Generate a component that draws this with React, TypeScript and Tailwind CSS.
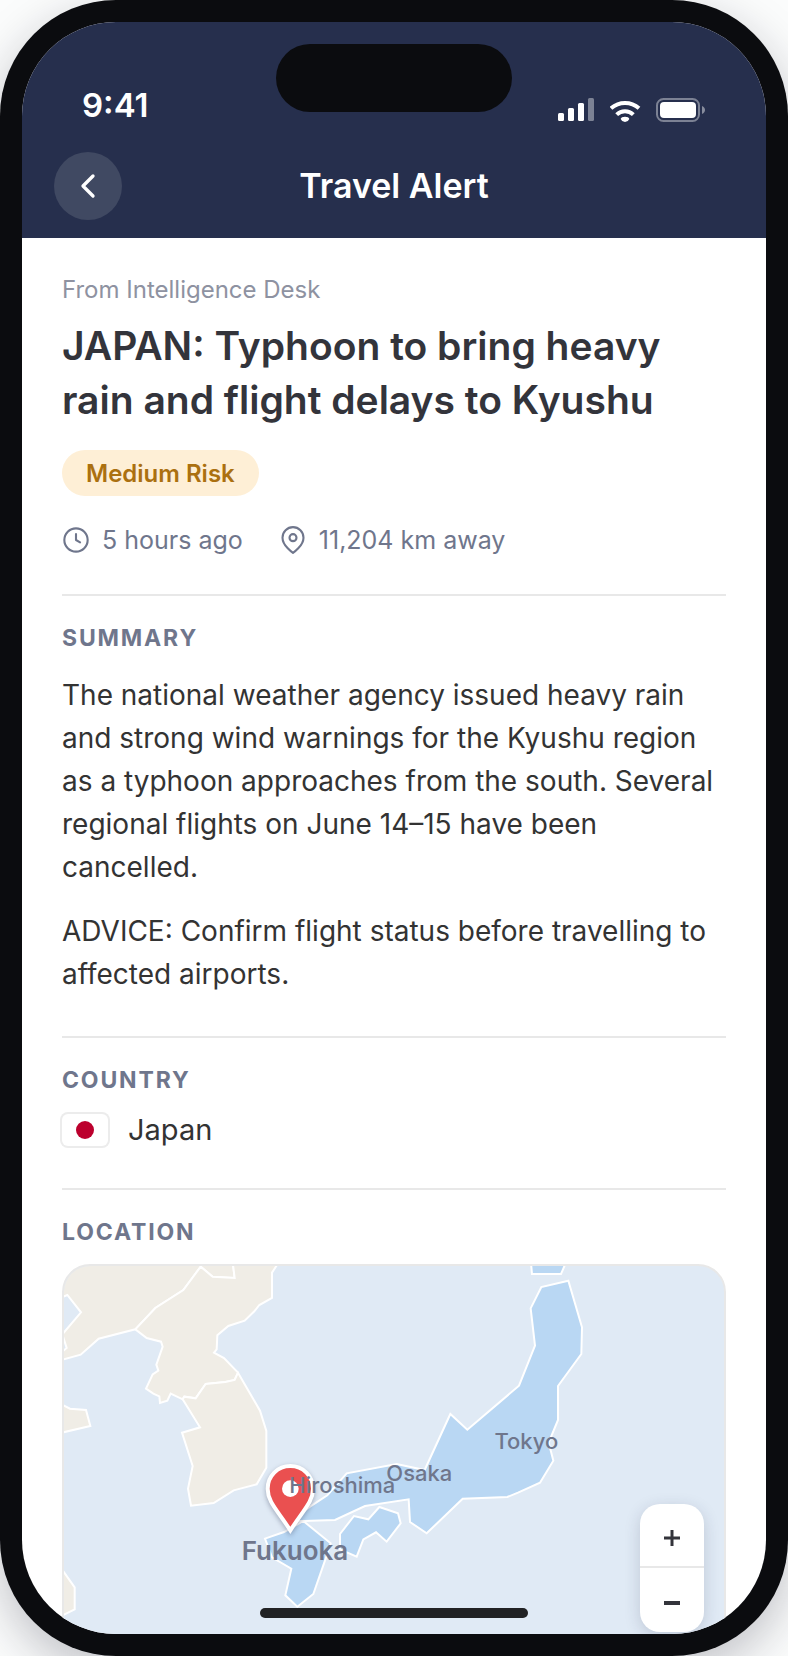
import type { ReactNode } from "react";
import { ChevronLeft } from "lucide-react";

const cities = [
    { name: "Hiroshima", x: 835, y: 682 },
    { name: "Osaka", x: 1066, y: 646 },
    { name: "Tokyo", x: 1387, y: 549 },
];

function StatusBar() {
    return (
        <div className="flex items-end justify-between px-[60px] pt-[66px] text-white">
            <span className="text-[33px] leading-[34px] font-semibold">9:41</span>

            <div className="flex items-center">
                {/* signal */}
                <svg className="mr-4 h-6 w-9" viewBox="0 0 36 24" fill="currentColor">
                    <rect x="0" y="15" width="6" height="8" rx="1.5" />
                    <rect x="10" y="10" width="6" height="13" rx="1.5" />
                    <rect x="20" y="5" width="6" height="18" rx="1.5" />
                    <rect x="30" y="0" width="6" height="23" rx="1.5" opacity="0.4" />
                </svg>

                {/* wifi */}
                <svg className="mr-3.5 h-6 w-8" viewBox="0 0 96 72" fill="none" stroke="currentColor" strokeWidth="12">
                    <path d="M3 31A63 63 0 0 1 87 31" />
                    <path d="M20 50A36 36 0 0 1 70 50" />
                    <path d="M32 63Q34 56 45 56Q56 56 58 63Q55 71 45 72Q35 71 32 63Z" fill="currentColor" stroke="none" />
                </svg>

                {/* battery */}
                <svg className="h-6 w-[50px]" viewBox="0 0 50 24">
                    <rect x="1" y="1" width="42" height="22" rx="6.5" fill="none" stroke="white" strokeOpacity="0.4" strokeWidth="2" />
                    <rect x="4" y="4" width="36" height="16" rx="4" fill="white" />
                    <path d="M46 8C50 9.500 50 14.500 46 16Z" fill="white" fillOpacity="0.45" />
                </svg>
            </div>
        </div>
    );
}

function SectionTitle({ children }: { children: ReactNode }) {
    return (
        <h3 className="text-[23px] leading-7 font-bold tracking-[0.08em] text-[#6f768c] uppercase">
            {children}
        </h3>
    );
}

function LocationMap() {
    return (
        <div className="relative mt-[18px] h-[390px] shrink-0 overflow-hidden rounded-[28px] border-2 border-[#e8e8e8] bg-[#e0eaf5]">
            <svg
                className="h-full w-full"
                viewBox="0 0 1980 1158"
                preserveAspectRatio="xMidYMid slice"
                role="img"
                aria-label="Map of southern Japan"
            >
                <g stroke="white" strokeWidth="6">
                    {/* mainland and Korea */}
                    <g fill="#f0ede6">
                        <path d="M-20-20H505L512 36L446 32L410 2L358 72L274 126L214 190L104 218L50 266L-20 285Z" />
                        <path d="M410 2L446 32L512 36L505-20H650L624 20V96L586 117L571 136L542 164L493 180L460 208L458 250L450 260L480 276L522 320L512 342L484 348L425 354L395 397L361 392L356 400L320 383L310 404L288 411L286 391L268 383L246 368L266 325L283 314L277 296L296 242L291 227L248 216L214 190L274 126L358 72Z" />
                        <path d="M522 320L588 434L607 495V605L578 655L509 673L449 711L381 719L372 668L386 600L354 500L408 484L356 400L361 392L395 397L425 354L484 348L512 342Z" />
                        <path d="M-20 408L18 428L66 432L79 480L-20 503Z" />
                        <path d="M-20 890L32 964V1030L-20 1056Z" />
                    </g>
                    <path d="M-20 100L10 87L51 139L-5 205L8 246L-20 270Z" fill="#e0eaf5" />

                    {/* Japan */}
                    <g fill="#b9d7f3">
                        <path d="M1400-20L1404 24H1491L1510-20Z" />
                        <path d="M1513 44L1432 63L1400 127L1413 239L1365 359L1210 491L1159 444L1082 612L998 594L848 622L790 688L738 722L680 765L718 765L813 762L903 720L1034 700L1038 768L1088 802L1196 698L1330 693L1362 680L1428 650L1468 584L1454 530L1482 462V360L1552 264L1554 184Z" />
                        <path d="M828 804L870 750L913 760L946 723L1002 742L1010 772L968 827L936 799L898 820L878 872L828 850Z" />
                        <path d="M603 818L660 798L718 765L800 832L787 872L748 984L700 1022L664 988L682 908L624 874Z" />
                    </g>
                </g>

                {/* marker */}
                <g className="drop-shadow-[0_6px_8px_rgba(38,47,77,0.35)]">
                    <path
                        d="M679 600C641 600 611 630 611 668C611 708 640 732 679 793C718 732 747 708 747 668C747 630 717 600 679 600Z"
                        fill="#ea5050"
                        stroke="white"
                        strokeWidth="12"
                    />
                    <circle cx="679" cy="668" r="25" fill="white" />
                </g>

                <g fill="#6f768c" textAnchor="middle">
                    {cities.map((city) => (
                        <text key={city.name} x={city.x} y={city.y} className="text-[66px] font-medium">
                            {city.name}
                        </text>
                    ))}
                    <text x="693" y="882" className="text-[78px] font-semibold">
                        Fukuoka
                    </text>
                </g>
            </svg>

            {/* zoom control */}
            <div className="absolute right-5 bottom-5 flex w-16 flex-col overflow-hidden rounded-[20px] bg-white shadow-[0_4px_16px_rgba(38,47,77,0.18)]">
                <button type="button" aria-label="Zoom in" className="flex h-16 items-center justify-center border-b-2 border-[#e8e8e8] pt-1.5">
                    <svg className="h-4 w-4" viewBox="0 0 16 16" stroke="#33343b" strokeWidth="3">
                        <path d="M0 8h16M8 0v16" />
                    </svg>
                </button>
                <button type="button" aria-label="Zoom out" className="flex h-16 items-center justify-center pt-1.5">
                    <svg className="h-4 w-4" viewBox="0 0 16 16" stroke="#33343b" strokeWidth="4">
                        <path d="M0 8h16" />
                    </svg>
                </button>
            </div>
        </div>
    );
}

export default function App() {
    return (
        <div className="h-screen overflow-hidden bg-[#fbfcfc] font-['Inter',sans-serif]">
            <div className="h-full rounded-[116px] bg-[#0b0c0f] p-[22px] shadow-[0_16px_48px_rgba(20,20,40,0.25)]">
                <div className="relative flex h-full flex-col overflow-hidden rounded-[94px] bg-white">

                    {/* HEADER */}
                    <header className="shrink-0 bg-[#262f4d] pb-[18px]">
                        <StatusBar />

                        <div className="mt-[30px] grid grid-cols-[68px_1fr_68px] items-center px-8">
                            <button
                                type="button"
                                aria-label="Back"
                                className="flex h-[68px] w-[68px] items-center justify-center rounded-full bg-[#404962] text-white"
                            >
                                <ChevronLeft size={40} />
                            </button>
                            <h1 className="text-center text-[34px] leading-10 font-semibold text-white">
                                Travel Alert
                            </h1>
                        </div>
                    </header>

                    {/* CONTENT */}
                    <main className="flex min-h-0 flex-1 flex-col overflow-hidden px-10 pt-[38px]">
                        <p className="text-2xl leading-7 text-[#8e92a1]">From Intelligence Desk</p>
                        <h2 className="mt-[15px] text-[39px] leading-[54px] font-semibold text-[#33343b]">
                            JAPAN: Typhoon to bring heavy rain and flight delays to Kyushu
                        </h2>

                        <span className="mt-[23px] self-start rounded-full bg-[#feefd6] px-6 pt-[9px] pb-[7px] text-2xl leading-[30px] font-semibold text-[#ab7010]">
                            Medium Risk
                        </span>

                        <div className="mt-[30px] flex gap-9 pb-10 text-[25px] leading-7 text-[#6f768c]">
                            <span className="flex items-center gap-3">
                                <svg className="h-7 w-7" viewBox="0 0 24 24" fill="none" stroke="currentColor" strokeWidth="1.8" strokeLinecap="round" strokeLinejoin="round">
                                    <circle cx="12" cy="12" r="10" />
                                    <path d="M12 7v5l3.500 2" />
                                </svg>
                                5 hours ago
                            </span>
                            <span className="flex items-center gap-3">
                                <svg className="h-7 w-7" viewBox="0 0 24 24" fill="none" stroke="currentColor" strokeWidth="1.8" strokeLinecap="round" strokeLinejoin="round">
                                    <path d="M21 10c0 7-9 13-9 13s-9-6-9-13a9 9 0 0 1 18 0z" />
                                    <circle cx="12" cy="10" r="3" />
                                </svg>
                                11,204 km away
                            </span>
                        </div>

                        <section className="border-t-2 border-[#e8e8e8] pt-7 pb-10">
                            <SectionTitle>Summary</SectionTitle>
                            <div className="mt-[22px] space-y-[21px] text-[28px] leading-[43px] text-[#333333]">
                                <p>
                                    The national weather agency issued heavy rain and strong wind warnings for the Kyushu
                                    region as a typhoon approaches from the south. Several regional flights on June 14–15
                                    have been cancelled.
                                </p>
                                <p>ADVICE: Confirm flight status before travelling to affected airports.</p>
                            </div>
                        </section>

                        <section className="border-t-2 border-[#e8e8e8] pt-7 pb-10">
                            <SectionTitle>Country</SectionTitle>
                            <div className="mt-[18px] flex h-9 items-center gap-5 text-[29px] text-[#333333]">
                                <span className="flex h-8 w-[46px] items-center justify-center rounded-md ring-2 ring-[#ececec]">
                                    <span className="h-[18px] w-[18px] rounded-full bg-[#bc002d]" />
                                </span>
                                Japan
                            </div>
                        </section>

                        <section className="border-t-2 border-[#e8e8e8] pt-7">
                            <SectionTitle>Location</SectionTitle>
                            <LocationMap />
                        </section>
                    </main>

                    {/* dynamic island and home indicator */}
                    <div className="absolute top-[22px] left-1/2 h-[68px] w-[236px] -translate-x-1/2 rounded-full bg-[#0b0c0f]" />
                    <div className="absolute bottom-4 left-1/2 h-2.5 w-[268px] -translate-x-1/2 rounded-full bg-[#212224]" />
                </div>
            </div>
        </div>
    );
}
